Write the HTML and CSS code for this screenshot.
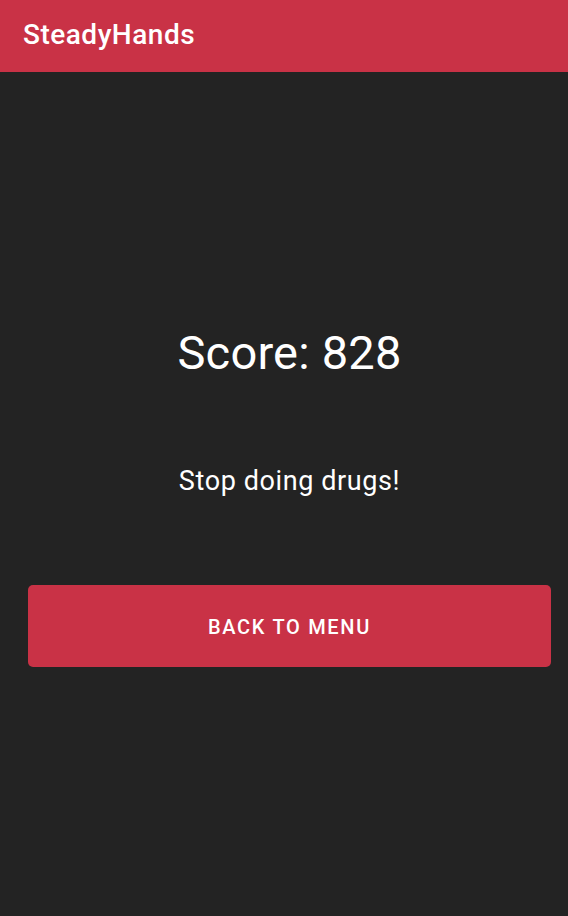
FILE: index.html
```html
<!DOCTYPE html>
<html>
<head>
<meta charset="utf-8">
<link rel="stylesheet" href="styles.css">
</head>
<body>
<header class="appbar"><h1 class="title">SteadyHands</h1></header>
<main class="content">
  <div class="score">Score: 828</div>
  <div class="message">Stop doing drugs!</div>
  <button class="menu-btn">BACK TO MENU</button>
</main>
</body>
</html>
```
FILE: styles.css
```css
html, body {
  margin: 0;
  padding: 0;
  height: 100%;
  background: #232323;
  font-family: Roboto, "Noto Sans", sans-serif;
  color: #ffffff;
}
.appbar {
  height: 72px;
  background: #c93246;
  display: flex;
  align-items: center;
  padding: 0 23px;
  box-sizing: border-box;
}
.title {
  margin: 0;
  font-size: 28px;
  font-weight: 500;
  letter-spacing: 0.5px;
  line-height: 34px;
  padding-bottom: 2px;
}
.content {
  display: flex;
  flex-direction: column;
  align-items: stretch;
  padding: 253px 17px 0 28px;
}
.score {
  text-align: center;
  font-size: 47px;
  letter-spacing: 0.2px;
  line-height: 56px;
  font-weight: 400;
}
.message {
  margin-top: 84px;
  text-align: center;
  font-size: 27px;
  letter-spacing: 0.6px;
  line-height: 32px;
}
.menu-btn {
  margin-top: 88px;
  height: 82px;
  border: none;
  border-radius: 5px;
  background: #c93246;
  color: #ffffff;
  font-family: Roboto, "Noto Sans", sans-serif;
  font-size: 20px;
  font-weight: 500;
  letter-spacing: 1.7px;
  padding: 2px 0 0 0;
}
```
